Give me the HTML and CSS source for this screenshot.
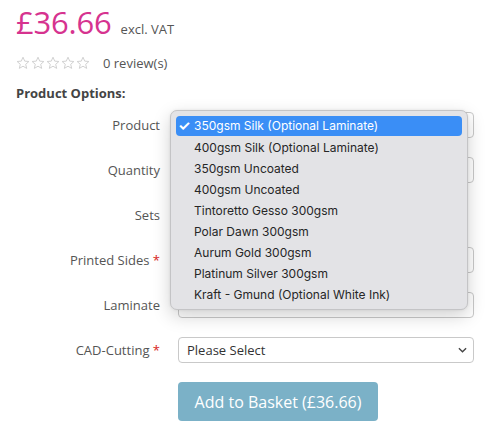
FILE: index.html
```html
<!DOCTYPE html>
<html>
<head>
<meta charset="utf-8">
<link rel="stylesheet" href="styles.css">
</head>
<body>
<div class="product">
  <div class="price-line">
    <span class="price">£36.66</span>
    <span class="vat">excl. VAT</span>
  </div>
  <div class="rating">
    <span class="stars">
      <svg viewBox="0 0 14 14" class="star"><path d="M7 1.2l1.7 3.9 4.2.4-3.2 2.8 1 4.1L7 10.2l-3.7 2.2 1-4.1L1.1 5.5l4.2-.4z"/></svg>
      <svg viewBox="0 0 14 14" class="star"><path d="M7 1.2l1.7 3.9 4.2.4-3.2 2.8 1 4.1L7 10.2l-3.7 2.2 1-4.1L1.1 5.5l4.2-.4z"/></svg>
      <svg viewBox="0 0 14 14" class="star"><path d="M7 1.2l1.7 3.9 4.2.4-3.2 2.8 1 4.1L7 10.2l-3.7 2.2 1-4.1L1.1 5.5l4.2-.4z"/></svg>
      <svg viewBox="0 0 14 14" class="star"><path d="M7 1.2l1.7 3.9 4.2.4-3.2 2.8 1 4.1L7 10.2l-3.7 2.2 1-4.1L1.1 5.5l4.2-.4z"/></svg>
      <svg viewBox="0 0 14 14" class="star"><path d="M7 1.2l1.7 3.9 4.2.4-3.2 2.8 1 4.1L7 10.2l-3.7 2.2 1-4.1L1.1 5.5l4.2-.4z"/></svg>
    </span>
    <span class="reviews">0 review(s)</span>
  </div>
  <h4 class="options-title">Product Options:</h4>

  <div class="form-area">
    <div class="options-grid">
      <label class="opt-label">Product</label>
      <div class="select-wrap"><div class="fake-select"></div><svg class="chev" viewBox="0 0 10 6"><path d="M1 1l4 4 4-4"/></svg></div>

      <label class="opt-label">Quantity</label>
      <div class="select-wrap"><div class="fake-select"></div><svg class="chev" viewBox="0 0 10 6"><path d="M1 1l4 4 4-4"/></svg></div>

      <label class="opt-label">Sets</label>
      <div class="select-wrap"><div class="fake-input"></div></div>

      <label class="opt-label">Printed Sides <span class="req">*</span></label>
      <div class="select-wrap"><div class="fake-select"></div><svg class="chev" viewBox="0 0 10 6"><path d="M1 1l4 4 4-4"/></svg></div>

      <label class="opt-label">Laminate</label>
      <div class="select-wrap"><div class="fake-select"></div><svg class="chev" viewBox="0 0 10 6"><path d="M1 1l4 4 4-4"/></svg></div>

      <label class="opt-label">CAD-Cutting <span class="req">*</span></label>
      <div class="select-wrap"><div class="fake-select">Please Select</div><svg class="chev" viewBox="0 0 10 6"><path d="M1 1l4 4 4-4"/></svg></div>

      <span></span>
      <div class="btn-cell"><button class="basket-btn">Add to Basket (£36.66)</button></div>
    </div>

    <ul class="dropdown">
      <li class="item selected"><span class="check">✓</span>350gsm Silk (Optional Laminate)</li>
      <li class="item">400gsm Silk (Optional Laminate)</li>
      <li class="item">350gsm Uncoated</li>
      <li class="item">400gsm Uncoated</li>
      <li class="item">Tintoretto Gesso 300gsm</li>
      <li class="item">Polar Dawn 300gsm</li>
      <li class="item">Aurum Gold 300gsm</li>
      <li class="item">Platinum Silver 300gsm</li>
      <li class="item">Kraft - Gmund (Optional White Ink)</li>
    </ul>
  </div>
</div>
</body>
</html>
```

FILE: styles.css
```css
* { box-sizing: border-box; }
html, body { margin: 0; padding: 0; background: #fff; }
body {
  font-family: "Open Sans", "Noto Sans", sans-serif;
  color: #555;
}
.product { padding: 0 16px; width: 501px; height: 439px; overflow: hidden; }

.price-line {
  display: flex;
  align-items: baseline;
  gap: 9px;
  height: 44px;
}
.price {
  font-size: 31px;
  line-height: 44px;
  color: #d6338f;
  letter-spacing: -0.2px;
}
.vat { font-size: 13px; color: #555; }

.rating {
  display: flex;
  align-items: center;
  height: 37px;
  gap: 13px;
}
.stars { display: flex; gap: 1px; }
.star { width: 14px; height: 14px; fill: none; stroke: #d2d2d2; stroke-width: 1; }
.reviews { font-size: 13px; color: #555; }

.options-title {
  margin: 0;
  font-size: 13px;
  font-weight: 700;
  color: #444;
  line-height: 24px;
  height: 31px;
}

.form-area { position: relative; }

.options-grid {
  display: grid;
  grid-template-columns: 144px 296px;
  column-gap: 18px;
  grid-auto-rows: 26px;
  row-gap: 19px;
}
.opt-label {
  font-size: 13px;
  color: #555;
  text-align: right;
  line-height: 26px;
}
.req { color: #d9241b; }

.select-wrap { position: relative; height: 26px; }
.fake-select, .fake-input {
  height: 26px;
  border: 1px solid #c9c9c9;
  border-radius: 4px;
  background: #fff;
  font-size: 13px;
  color: #333;
  line-height: 24px;
  padding-left: 8px;
}
.fake-input { width: 120px; }
.chev {
  position: absolute;
  right: 7px;
  top: 10px;
  width: 9px;
  height: 6px;
  fill: none;
  stroke: #444;
  stroke-width: 1.5;
}

.btn-cell { height: 39px; }
.basket-btn {
  width: 200px;
  height: 39px;
  border: none;
  border-radius: 4px;
  background: #7bb1c7;
  color: #fff;
  font-family: "Open Sans", sans-serif;
  font-size: 16px;
  padding: 0;
}

.dropdown {
  position: absolute;
  left: 154px;
  top: -2px;
  width: 298px;
  height: 200px;
  margin: 0;
  padding: 5px 5px;
  list-style: none;
  background: #e3e3e6;
  border: 1px solid #c4c4c6;
  border-radius: 7px;
  box-shadow: 0 6px 18px rgba(0,0,0,0.18), 0 0 3px rgba(0,0,0,0.08);
  font-family: "Inter", "Liberation Sans", sans-serif;
  font-size: 12px;
  color: #262626;
}
.item {
  height: 21px;
  line-height: 21px;
  padding-left: 18px;
  position: relative;
  border-radius: 4px;
}
.item.selected {
  background: #3a8ef6;
  color: #fff;
  height: 20px;
  line-height: 20px;
  margin-bottom: 1px;
}
.check {
  position: absolute;
  left: 2px;
  top: 0;
  font-size: 14px;
  font-weight: 700;
}
```
